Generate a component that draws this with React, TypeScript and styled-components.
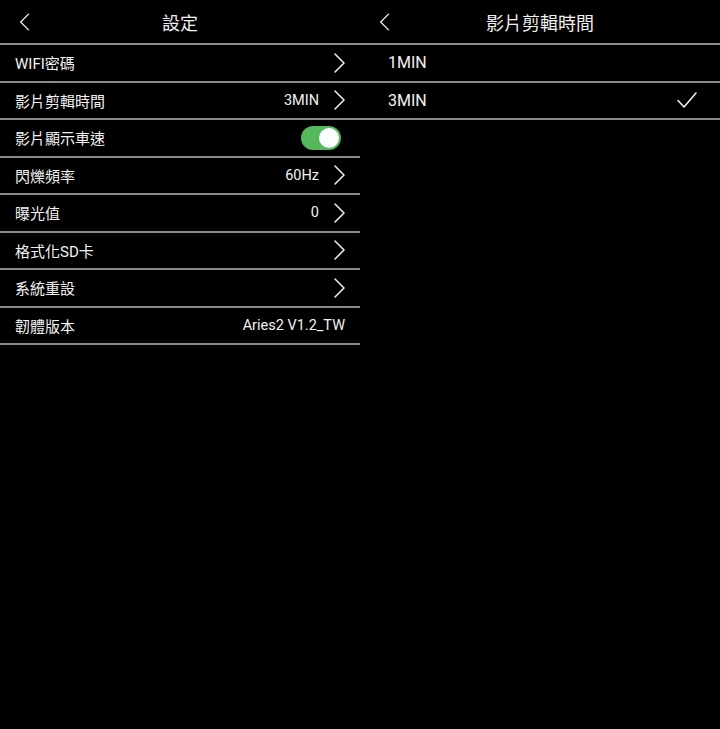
import * as React from 'react'
import styled, { createGlobalStyle } from 'styled-components'

const GlobalStyle = createGlobalStyle`
    html, body {
        margin: 0;
        padding: 0;
        background: #000;
    }
    body {
        font-family: Roboto, "Noto Sans CJK TC", "Noto Sans", sans-serif;
        color: #f2f2f2;
    }
`

const Page = styled.div`
    display: flex;
    width: 720px;
    height: 729px;
    background: #000;
`

const Panel = styled.div`
    width: 360px;
    display: flex;
    flex-direction: column;
`

const Header = styled.div`
    position: relative;
    height: 43px;
    display: flex;
    align-items: center;
    justify-content: center;
    border-bottom: 2px solid #8a8a8a;
    font-size: 18px;
    color: #f0f0f0;
`

const BackButton = styled.div`
    position: absolute;
    left: 18px;
    top: 12px;
    width: 14px;
    height: 20px;
    display: flex;
`

const Row = styled.div<{ $indent?: number }>`
    height: 35.5px;
    display: flex;
    align-items: center;
    padding: 0 12px 0 ${(p) => p.$indent ?? 15}px;
    border-bottom: 2px solid #8a8a8a;
    font-size: 15px;
`

const Label = styled.div<{ $size?: number }>`
    flex: 1;
    font-size: ${(p) => p.$size ?? 15}px;
`

const Value = styled.div`
    font-size: 14.5px;
    margin-right: 3px;
`

const ChevronBox = styled.div`
    width: 16px;
    height: 22px;
    margin-left: 10px;
    display: flex;
`

const Toggle = styled.div`
    position: relative;
    width: 40px;
    height: 24px;
    margin-right: 7px;
    border-radius: 12px;
    background: #55b85c;
`

const Knob = styled.div`
    position: absolute;
    top: 2px;
    right: 2px;
    width: 20px;
    height: 20px;
    border-radius: 50%;
    background: #fff;
`

const Chevron = ({ left }: { left?: boolean }) => (
    <svg width="100%" height="100%" viewBox="0 0 16 22" fill="none">
        <path
            d={left ? 'M12 2 L3 11 L12 20' : 'M3 2 L12 11 L3 20'}
            stroke="#e8e8e8"
            strokeWidth="1.6"
            strokeLinecap="round"
            strokeLinejoin="round"
        />
    </svg>
)

const Check = styled.svg`
    width: 22px;
    height: 18px;
    margin-right: 10px;
`

interface ISetting {
    label: string
    value?: string
    arrow?: boolean
    toggle?: boolean
}

const settings: ISetting[] = [
    { label: 'WIFI密碼', arrow: true },
    { label: '影片剪輯時間', value: '3MIN', arrow: true },
    { label: '影片顯示車速', toggle: true },
    { label: '閃爍頻率', value: '60Hz', arrow: true },
    { label: '曝光值', value: '0', arrow: true },
    { label: '格式化SD卡', arrow: true },
    { label: '系統重設', arrow: true },
    { label: '韌體版本', value: 'Aries2 V1.2_TW' }
]

const options = [
    { label: '1MIN', selected: false },
    { label: '3MIN', selected: true }
]

const App: React.FC = () => (
    <>
        <GlobalStyle />
        <Page>
            <Panel>
                <Header>
                    <BackButton>
                        <Chevron left />
                    </BackButton>
                    設定
                </Header>
                {settings.map((s) => (
                    <Row key={s.label}>
                        <Label>{s.label}</Label>
                        {s.value && <Value>{s.value}</Value>}
                        {s.toggle && (
                            <Toggle>
                                <Knob />
                            </Toggle>
                        )}
                        {s.arrow && (
                            <ChevronBox>
                                <Chevron />
                            </ChevronBox>
                        )}
                    </Row>
                ))}
            </Panel>
            <Panel>
                <Header>
                    <BackButton>
                        <Chevron left />
                    </BackButton>
                    影片剪輯時間
                </Header>
                {options.map((o) => (
                    <Row key={o.label} $indent={28}>
                        <Label $size={16}>{o.label}</Label>
                        {o.selected && (
                            <Check viewBox="0 0 22 18" fill="none">
                                <path
                                    d="M2 9.5 L8 16 L20 2"
                                    stroke="#eeeeee"
                                    strokeWidth="1.6"
                                    strokeLinecap="round"
                                    strokeLinejoin="round"
                                />
                            </Check>
                        )}
                    </Row>
                ))}
            </Panel>
        </Page>
    </>
)

export default App
